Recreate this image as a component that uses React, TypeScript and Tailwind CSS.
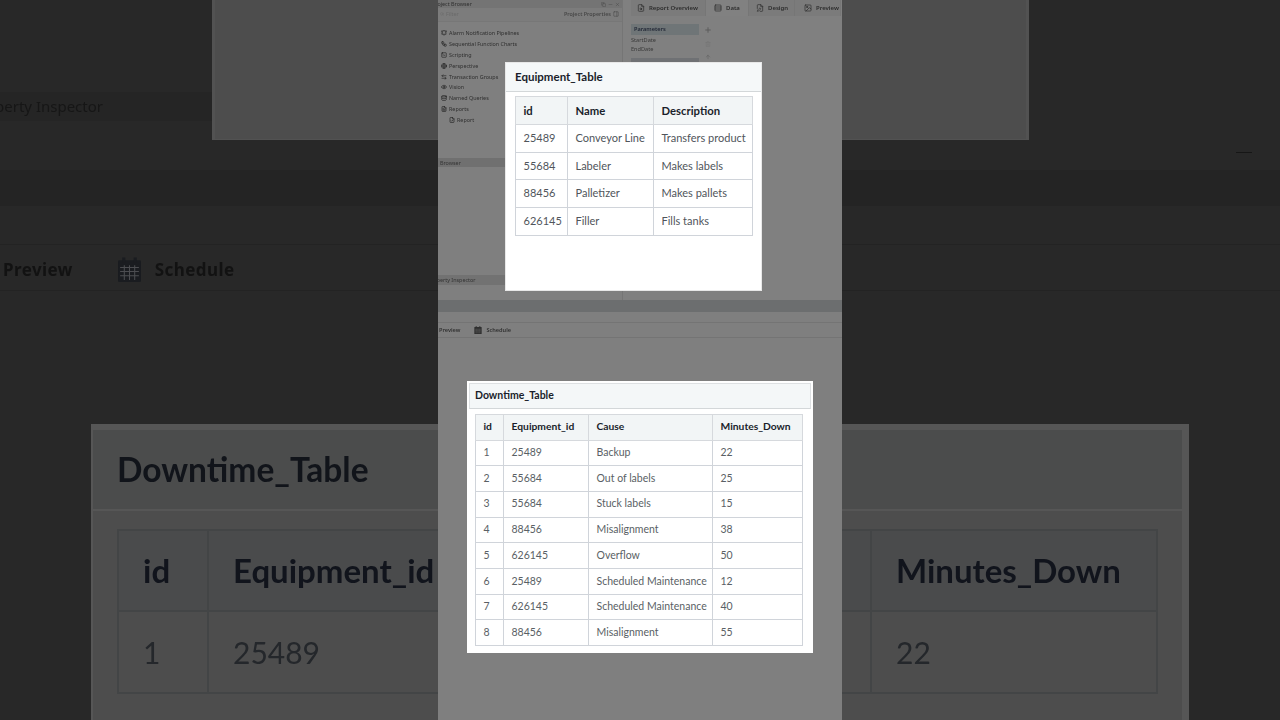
import type React from "react"
import {
  Database,
  Eye,
  FilePen,
  FileCheck,
  FileSearch,
  FileText,
  Globe,
  Image,
  Plus,
  Rows3,
  SquareTerminal,
  Trash2,
  ArrowUp,
  ArrowLeftRight,
  Workflow,
  BellRing,
  Search,
  Copy,
  Minus,
  X,
  PanelRight,
} from "lucide-react"

const equipmentRows = [
  ["25489", "Conveyor Line", "Transfers product"],
  ["55684", "Labeler", "Makes labels"],
  ["88456", "Palletizer", "Makes pallets"],
  ["626145", "Filler", "Fills tanks"],
]

const downtimeRows = [
  ["1", "25489", "Backup", "22"],
  ["2", "55684", "Out of labels", "25"],
  ["3", "55684", "Stuck labels", "15"],
  ["4", "88456", "Misalignment", "38"],
  ["5", "626145", "Overflow", "50"],
  ["6", "25489", "Scheduled Maintenance", "12"],
  ["7", "626145", "Scheduled Maintenance", "40"],
  ["8", "88456", "Misalignment", "55"],
]

const browserItems: [React.ElementType, string, boolean][] = [
  [BellRing, "Alarm Notification Pipelines", false],
  [Workflow, "Sequential Function Charts", false],
  [SquareTerminal, "Scripting", false],
  [Globe, "Perspective", false],
  [ArrowLeftRight, "Transaction Groups", false],
  [Eye, "Vision", false],
  [Database, "Named Queries", false],
  [FileText, "Reports", false],
  [FileCheck, "Report", true],
]

type TableProps = {
  headers: string[]
  rows: string[][]
  widths: string[]
  tableClass: string
  thClass: string
  tdClass: string
}

function DataTable({ headers, rows, widths, tableClass, thClass, tdClass }: TableProps) {
  return (
    <table className={`table-fixed border-collapse text-left ${tableClass}`}>
      <colgroup>
        {widths.map((w, i) => (
          <col key={i} className={w} />
        ))}
      </colgroup>
      <thead>
        <tr>
          {headers.map((h, i) => (
            <th key={i} className={thClass}>
              {h}
            </th>
          ))}
        </tr>
      </thead>
      <tbody>
        {rows.map((row, i) => (
          <tr key={i}>
            {row.map((cell, j) => (
              <td key={j} className={tdClass}>
                {cell}
              </td>
            ))}
          </tr>
        ))}
      </tbody>
    </table>
  )
}

// filled calendar glyph from the designer's tab bar
function ScheduleIcon({ className }: { className: string }) {
  return (
    <svg viewBox="0 0 24 24" className={className}>
      <rect x="1" y="3" width="22" height="21" rx="1" fill="currentColor" />
      <rect x="5" y="0.5" width="3" height="5" fill="currentColor" />
      <rect x="16" y="0.5" width="3" height="5" fill="currentColor" />
      <path
        d="M3 10h18M3 14h18M3 18h18M7 8v14M12 8v14M17 8v14"
        stroke="#ffffff"
        strokeOpacity="0.22"
        strokeWidth="1"
        fill="none"
      />
    </svg>
  )
}

// the enlarged, darkened copy behind the portrait video
// its Cause column sits fully behind the video, so it stays blank
function Backdrop() {
  return (
    <div className="flex h-full flex-col blur-[0.7px]">
      <div className="relative h-[140px] shrink-0">
        <div className="ml-[212px] h-full w-[817px] border-x-[3px] border-b border-[#525252] bg-[#4d4d4d]" />
        <div className="absolute left-0 top-[92px] flex h-[29px] w-[212px] items-center overflow-hidden bg-[#252525] text-[15px] text-[#161616]">
          <span className="-ml-[29px] whitespace-nowrap">Property Inspector</span>
        </div>
      </div>
      <div className="h-[30px] shrink-0" />
      <div className="h-[36px] shrink-0 border-b border-[#242424] bg-[#242424]" />
      <div className="h-[39px] shrink-0 border-b border-[#232323]" />
      <div className="flex h-[46px] shrink-0 items-center border-b border-[#232323] pt-[4px] text-[17px] font-bold tracking-wide text-[#121212]">
        <span className="ml-[3px]">Preview</span>
        <ScheduleIcon className="ml-[44px] h-[25px] w-[25px] text-[#1a1c20]" />
        <span className="ml-[13px]">Schedule</span>
      </div>
      <div className="h-[133px] shrink-0" />
      <div className="ml-[91px] flex w-[1098px] grow flex-col overflow-hidden border-t-[6px] border-r-[7px] border-l-[2px] border-[#565656] bg-[#4d4d4d] font-['Lato',sans-serif]">
        <div className="flex h-[81px] shrink-0 items-center border-b-2 border-[#565656] bg-[#4b4c4c] pl-[24px] text-[33.5px] font-bold text-[#11141a]">
          Downtime_Table
        </div>
        <div className="ml-[24px] mt-[18px]">
          <DataTable
            headers={["id", "Equipment_id", "", "Minutes_Down"]}
            rows={[["1", "25489", "", "22"]]}
            widths={["w-[90px]", "w-[269px]", "w-[394px]", "w-[286px]"]}
            tableClass="w-[1039px]"
            thClass="h-[81px] whitespace-nowrap border-2 border-[#434546] bg-[#4a4b4c] px-[24px] text-[33px] font-bold text-[#11141c]"
            tdClass="h-[82px] border-2 border-[#434546] px-[24px] text-[30px] text-[#24272b]"
          />
        </div>
      </div>
      <div className="absolute left-[1236px] top-[152px] h-px w-[16px] bg-[#161616]" />
    </div>
  )
}

function ProjectBrowser() {
  return (
    <div className="flex h-[300px] w-[185px] shrink-0 flex-col border-r border-[#757575] bg-[#7f7f7f] text-[5.4px] text-[#2f2f2f]">
      <div className="flex h-[8px] shrink-0 items-center justify-between overflow-hidden bg-[#747474] pr-[2px]">
        <span className="-ml-[6px] whitespace-nowrap">Project Browser</span>
        <span className="flex items-center gap-[2px] text-[#4a4a4a]">
          <Copy className="h-[5px] w-[5px]" />
          <Minus className="h-[5px] w-[5px]" />
          <X className="h-[5px] w-[5px]" />
        </span>
      </div>
      <div className="flex h-[14px] shrink-0 items-center justify-between border-b border-[#777777] bg-[#7c7c7c] pl-[2px] pr-[3px]">
        <span className="flex items-center gap-[2px] text-[#6a6a6a]">
          <Search className="h-[4px] w-[4px]" />
          Filter
        </span>
        <span className="flex items-center gap-[2px] font-semibold text-[#484848]">
          Project Properties
          <PanelRight className="h-[6px] w-[6px]" />
        </span>
      </div>
      <ul className="mt-[6px] flex flex-col">
        {browserItems.map(([Icon, label, child]) => (
          <li key={label} className={`flex h-[10.8px] items-center gap-[2px] ${child ? "pl-[11px]" : "pl-[3px]"}`}>
            <Icon className="h-[6px] w-[6px] text-[#222222]" strokeWidth={2.5} />
            {label}
          </li>
        ))}
      </ul>
      <div className="mt-[33px] flex h-[9px] shrink-0 items-center overflow-hidden bg-[#707070]">
        <span className="ml-[2px] text-[#333333]">Browser</span>
      </div>
      <div className="h-[108px] shrink-0" />
      <div className="flex h-[10px] shrink-0 items-center overflow-hidden bg-[#727272]">
        <span className="-ml-[10px] whitespace-nowrap text-[#333333]">Property Inspector</span>
      </div>
    </div>
  )
}

function ReportPanel() {
  const tabs: [React.ElementType, string, string, boolean][] = [
    [FileSearch, "Report Overview", "w-[75px] pl-[6px]", false],
    [Rows3, "Data", "w-[43px] pl-[8px]", true],
    [FilePen, "Design", "w-[46px] pl-[7px]", false],
    [Image, "Preview", "w-[46px] pl-[9px]", false],
  ]
  return (
    <div className="flex h-[300px] grow flex-col overflow-hidden bg-[#808080] pl-[8px] text-[#2c2c2c]">
      <div className="flex h-[16px] shrink-0 items-center text-[6px] font-semibold">
        {tabs.map(([Icon, label, box, active]) => (
          <div
            key={label}
            className={`flex h-full shrink-0 items-center gap-[4px] border-r border-[#767676] ${box} ${active ? "bg-[#818181]" : "bg-[#7b7b7b]"}`}
          >
            <Icon className="h-[8px] w-[8px] shrink-0" />
            <span className="whitespace-nowrap">{label}</span>
          </div>
        ))}
      </div>
      <div className="mt-[8px] flex gap-[5px]">
        <div className="w-[68px] text-[5.6px]">
          <div className="flex h-[11px] items-center bg-[#6f7577] pl-[3px] font-semibold text-[#1e2433]">Parameters</div>
          <div className="mt-[1px] flex h-[9px] items-center text-[#3a3a3a]">StartDate</div>
          <div className="flex h-[9px] items-center text-[#3a3a3a]">EndDate</div>
          <div className="mt-[4px] h-[8px] bg-[#6f7174]" />
        </div>
        <div className="flex flex-col items-center gap-[7px] pt-[2px] text-[#5d5d5d]">
          <Plus className="h-[8px] w-[8px]" strokeWidth={3} />
          <Trash2 className="h-[6px] w-[6px] text-[#747474]" />
          <ArrowUp className="h-[6px] w-[6px]" />
        </div>
      </div>
    </div>
  )
}

export default function App() {
  return (
    <div className="relative h-[720px] w-[1280px] overflow-hidden bg-[#282828] font-['Noto_Sans',sans-serif]">
      <Backdrop />

      <div className="absolute left-[438px] top-0 flex h-[720px] w-[404px] flex-col bg-[#7f7f7f]">
        <div className="flex h-[300px] shrink-0 blur-[0.4px]">
          <ProjectBrowser />
          <ReportPanel />
        </div>
        <div className="h-[12px] shrink-0 bg-[#6c6e6f]" />
        <div className="h-[11px] shrink-0 border-b border-[#747474]" />
        <div className="flex h-[15px] shrink-0 items-center border-b border-[#747474] text-[5.6px] font-semibold text-[#303030] blur-[0.3px]">
          <span className="ml-px">Preview</span>
          <ScheduleIcon className="ml-[14px] h-[8px] w-[8px] text-[#303030]" />
          <span className="ml-[4px]">Schedule</span>
        </div>

        <div className="absolute left-[67px] top-[62px] flex h-[229px] w-[257px] flex-col border border-[#e8e8e8] bg-white font-['Lato',sans-serif]">
          <div className="flex h-[29px] shrink-0 items-center border-b border-[#d3d7d9] bg-[#f5f8f9] pl-[9px] text-[11.5px] font-bold text-[#1a1e2b]">
            Equipment_Table
          </div>
          <div className="ml-[9px] mt-[4px]">
            <DataTable
              headers={["id", "Name", "Description"]}
              rows={equipmentRows}
              widths={["w-[52px]", "w-[86px]", "w-[99px]"]}
              tableClass="w-[237px]"
              thClass="h-[28px] border border-[#d6d9dd] bg-[#f2f5f6] px-[7.5px] pt-[2px] text-[11.3px] font-bold text-[#1a1e2b]"
              tdClass="h-[27.7px] whitespace-nowrap border border-[#d0d4da] px-[7.5px] text-[11px] text-[#50555b]"
            />
          </div>
        </div>

        <div className="absolute left-[29px] top-[381px] flex h-[272px] w-[346px] flex-col border-2 border-white bg-white font-['Lato',sans-serif]">
          <div className="flex h-[26px] shrink-0 items-center border border-b-[#d3d7d9] border-x-[#dde0e2] border-t-[#dde0e2] bg-[#f4f7f8] pl-[5px] text-[10.5px] font-bold text-[#1a1e2b]">
            Downtime_Table
          </div>
          <div className="ml-[6px] mt-[5px]">
            <DataTable
              headers={["id", "Equipment_id", "Cause", "Minutes_Down"]}
              rows={downtimeRows}
              widths={["w-[28px]", "w-[85px]", "w-[124px]", "w-[90px]"]}
              tableClass="w-[327px]"
              thClass="h-[25.6px] whitespace-nowrap border border-[#d6d9dd] bg-[#f2f5f6] px-[7.5px] pb-px text-[10.3px] font-bold text-[#1a1e2b]"
              tdClass="h-[25.7px] whitespace-nowrap border border-[#d0d4da] px-[7.5px] text-[10.5px] text-[#5a5f65]"
            />
          </div>
        </div>
      </div>
    </div>
  )
}
